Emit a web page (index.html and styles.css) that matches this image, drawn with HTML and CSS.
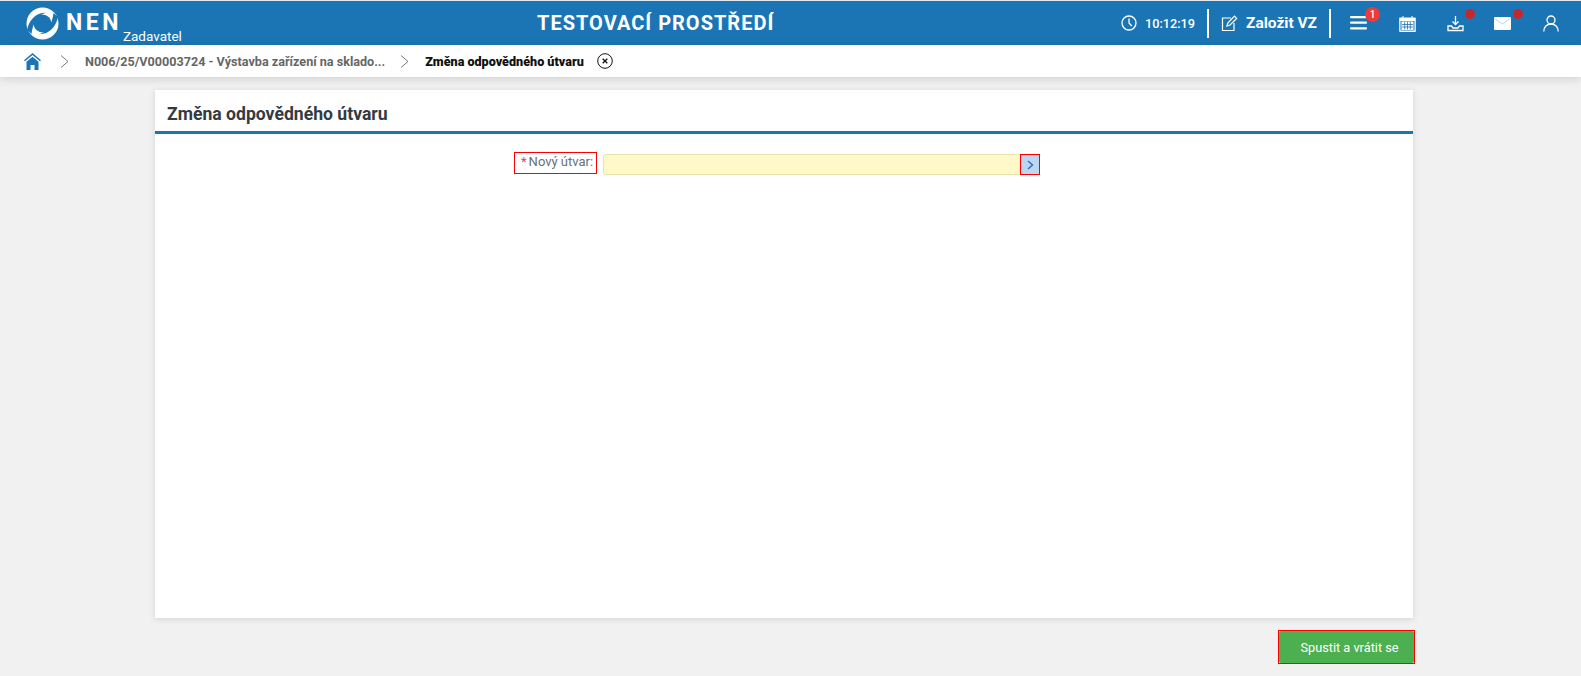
FILE: index.html
```html
<!DOCTYPE html>
<html lang="cs">
<head>
<meta charset="utf-8">
<title>Změna odpovědného útvaru</title>
<link rel="stylesheet" href="styles.css">
</head>
<body>
<header class="topbar">
  <div class="brand">
    <svg class="logo" width="33" height="33" viewBox="0 0 33 33">
      <circle cx="16.500" cy="16.500" r="16" fill="#fff"/>
      <circle cx="16.500" cy="16.500" r="9" fill="#1b75b4"/>
      <path fill="#1b75b4" d="M1 23C3 13 10 5.500 20 5.800C12 8 7 15 5.500 27z"/>
      <path fill="#1b75b4" d="M32 10C30 20 23 27.500 13 27.200C21 25 26 18 27.500 6z"/>
    </svg>
    <span class="nen">NEN</span>
    <span class="role">Zadavatel</span>
  </div>
  <div class="env">TESTOVACÍ PROSTŘEDÍ</div>
  <div class="tools">
    <svg class="clock" width="16" height="16" viewBox="0 0 16 16" fill="none" stroke="#fff" stroke-width="1.300"><circle cx="8" cy="8" r="7"/><path d="M8 3.500V8l2.800 3"/></svg>
    <span class="time">10:12:19</span>
    <span class="divider"></span>
    <svg class="edit" width="17" height="17" viewBox="0 0 17 17" fill="none" stroke="#fff" stroke-width="1.200"><path d="M10 3H1.500v12.500H13V8"/><path d="M6 11l.8-3L13.500 1.200l2.200 2.200L9 10z"/></svg>
    <span class="create">Založit VZ</span>
    <span class="divider second"></span>
    <span class="tool menu">
      <svg width="17" height="14" viewBox="0 0 17 14" fill="#fff"><rect y="0" width="17" height="2.200" rx="1"/><rect y="5.600" width="17" height="2.200" rx="1"/><rect y="11.200" width="17" height="2.200" rx="1"/></svg>
      <span class="count">1</span>
    </span>
    <span class="tool cal">
      <svg width="17" height="17" viewBox="0 0 17 17"><path fill="#fff" d="M1 2.500h2.500V1h1v1.500h8V1h1v1.500H16a.8.800 0 0 1 .8.800v12.900a.8.800 0 0 1-.8.800H1a.8.800 0 0 1-.8-.800V3.300A.8.800 0 0 1 1 2.500z"/><path fill="#1b75b4" d="M1.500 6h14v9.500h-14z"/><path fill="#fff" d="M2.500 6.500h12v8.500h-12z"/><path stroke="#1b75b4" stroke-width=".8" d="M5.700 7v7.500M8.500 7v7.500M11.300 7v7.500M3 9.500h11M3 12h11"/></svg>
    </span>
    <span class="tool dl">
      <svg width="17" height="17" viewBox="0 0 17 17" fill="none" stroke="#fff" stroke-width="1.300"><path d="M8.500 1v8M5.500 6.500l3 3 3-3"/><path d="M1 11h3.500l1.500 2h5l1.500-2H16v4.500H1z"/></svg>
      <span class="dot"></span>
    </span>
    <span class="tool mail">
      <svg width="17" height="13" viewBox="0 0 17 13"><rect width="17" height="13" rx="1" fill="#fff"/><path d="M.5 1.500l8 5.500 8-5.500" fill="none" stroke="#b9d5ea" stroke-width="1"/></svg>
      <span class="dot dot-mail"></span>
    </span>
    <span class="tool user">
      <svg width="16" height="17" viewBox="0 0 16 17" fill="none" stroke="#fff" stroke-width="1.300"><circle cx="8" cy="5" r="4"/><path d="M.8 16.500c0-4.500 3-7.500 7.200-7.500s7.200 3 7.200 7.500"/></svg>
    </span>
  </div>
</header>
<nav class="crumbs">
  <svg class="home" width="17" height="17" viewBox="0 0 17 17"><path fill="#1b75b4" d="M8.500 0L17 7.200l-1 1.100-7.500-6.300L1 8.300 0 7.200z"/><path fill="#1b75b4" d="M8.500 3.800l6 5V17h-4v-5h-4v5h-4V8.800z"/></svg>
  <svg class="chev" width="9" height="13" viewBox="0 0 9 13" fill="none" stroke="#777" stroke-width="1"><path d="M1 .5l7 6-7 6"/></svg>
  <a class="crumb">N006/25/V00003724 - Výstavba zařízení na sklado...</a>
  <svg class="chev chev-next" width="9" height="13" viewBox="0 0 9 13" fill="none" stroke="#777" stroke-width="1"><path d="M1 .5l7 6-7 6"/></svg>
  <strong class="current">Změna odpovědného útvaru</strong>
  <svg class="close" width="16" height="16" viewBox="0 0 16 16" fill="none" stroke="#111"><circle cx="8" cy="8" r="7.300"/><path stroke-width="1.300" d="M5.700 5.700l4.600 4.600M10.300 5.700l-4.600 4.600"/></svg>
</nav>
<main class="page">
  <section class="card">
    <h1 class="card-title">Změna odpovědného útvaru</h1>
    <div class="field">
      <label class="label"><span class="req">*</span>Nový útvar:</label>
      <div class="input">
        <button class="pick" type="button">
          <svg width="7" height="10" viewBox="0 0 7 10" fill="none" stroke="#2a6fb8" stroke-width="1.400"><path d="M1 1l4.500 4L1 9"/></svg>
        </button>
      </div>
    </div>
  </section>
  <div class="actions">
    <div class="run-frame">
      <button class="run" type="button">Spustit a vrátit se</button>
    </div>
  </div>
</main>
</body>
</html>
```
FILE: styles.css
```css
* { box-sizing: border-box; }
html, body { margin: 0; height: 100%; }
body {
  background: #f1f1f1;
  font-family: Roboto, "Liberation Sans", sans-serif;
  overflow: hidden;
}
.topbar {
  height: 45px;
  border-top: 1px solid #dfe9f1;
  background: #1b75b4;
  color: #fff;
  display: flex;
  align-items: center;
  padding-left: 26px;
}
.brand { display: flex; align-items: flex-start; width: 511px; height: 44px; }
.logo { margin-top: 6px; }
.nen {
  font-size: 23px;
  font-weight: 700;
  letter-spacing: 3.500px;
  line-height: 27px;
  margin: 8px 0 0 7px;
}
.role { font-size: 13.500px; line-height: 16px; margin: 27px 0 0 1px; }
.env { font-size: 20px; font-weight: 700; letter-spacing: 1px; width: 584px; white-space: nowrap; }
.tools { display: flex; align-items: center; height: 44px; }
.time { font-size: 12.700px; font-weight: 500; margin-left: 8px; }
.divider { width: 2px; height: 29px; background: #fff; margin-left: 12px; }
.edit { margin-left: 12px; }
.create { font-size: 15.500px; font-weight: 700; margin-left: 8px; }
.divider.second { margin-left: 12px; }
.tool { position: relative; display: flex; justify-content: center; width: 17px; }
.menu { margin-left: 19px; }
.cal { margin-left: 32px; }
.dl { margin-left: 31px; }
.mail { margin-left: 30px; }
.user { margin-left: 31px; }
.count {
  position: absolute;
  top: -9px;
  left: 15px;
  width: 15px;
  height: 15px;
  border-radius: 50%;
  background: #f03a35;
  font-size: 10px;
  font-weight: 500;
  line-height: 15px;
  text-align: center;
}
.dot {
  position: absolute;
  top: -6px;
  left: 18px;
  width: 10px;
  height: 10px;
  border-radius: 50%;
  background: #c4272c;
}
.dot-mail { top: -8px; left: 19px; }
.crumbs {
  height: 32px;
  background: #fff;
  box-shadow: 0 2px 10px rgba(0,0,0,.14);
  display: flex;
  align-items: center;
  padding-left: 24px;
  position: relative;
  font-size: 12.600px;
  font-weight: 700;
}
.chev { margin-left: 19px; }
.chev-next { margin-left: 15px; }
.crumb { margin-left: 16px; color: #666; white-space: nowrap; }
.current { margin-left: 16px; color: #111; white-space: nowrap; }
.close { margin-left: 13px; }
.page { padding: 13px 168px 0 155px; }
.card {
  height: 528px;
  background: #fff;
  box-shadow: 0 1px 6px rgba(0,0,0,.13);
}
.card-title {
  margin: 0;
  height: 44px;
  padding: 13px 0 0 12px;
  border-bottom: 3px solid #1b75b4;
  color: #333a42;
  font-size: 17.600px;
  font-weight: 700;
  line-height: 22px;
}
.field { display: flex; align-items: flex-start; padding: 18px 0 0 359px; }
.label {
  width: 83px;
  height: 22px;
  border: 1px solid #f00;
  color: #66707c;
  font-size: 13px;
  line-height: 18px;
  padding-left: 6px;
  white-space: nowrap;
}
.req { color: #d9455f; margin-right: 2px; }
.input {
  width: 437px;
  height: 21px;
  margin: 2px 0 0 6px;
  background: #fff9c9;
  border: 1px solid #e8e2ad;
  border-radius: 3px;
  display: flex;
  justify-content: flex-end;
  align-items: center;
}
.pick {
  width: 20px;
  height: 21px;
  margin: -1px -1px -1px 0;
  padding: 0;
  border: 1px solid #f00;
  background: #bdd7f3;
  display: flex;
  align-items: center;
  justify-content: center;
}
.actions { display: flex; justify-content: flex-end; padding: 12px 0 0; margin-right: -2px; }
.run-frame { border: 1px solid #f00; width: 137px; height: 34px; background: #f1f1f1; }
.run {
  display: block;
  width: 100%;
  height: 100%;
  background: #4caf50;
  border: 0;
  border-radius: 2px;
  color: #fff;
  font-family: inherit;
  font-size: 12.750px;
  padding: 0 0 0 6px;
}
```
